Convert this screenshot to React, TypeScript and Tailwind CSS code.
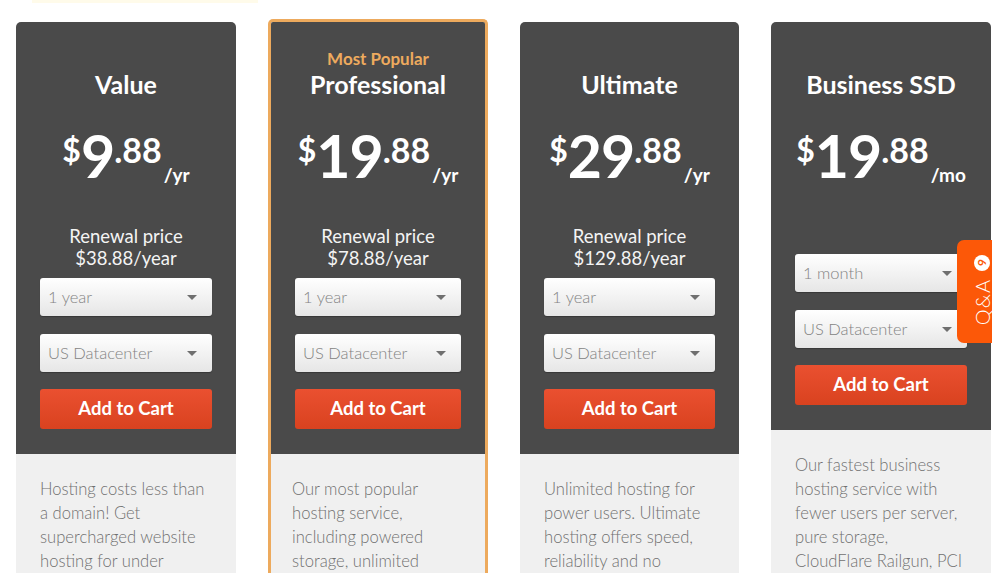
import React from 'react';

type Plan = {
  name: string;
  popular?: boolean;
  whole: string;
  cents: string;
  period: string;
  renewal?: string;
  term: string;
  width: string;
  lines: string[];
};

const plans: Plan[] = [
  {
    name: 'Value',
    whole: '9',
    cents: '.88',
    period: '/yr',
    renewal: '$38.88/year',
    term: '1 year',
    width: 'w-[220px]',
    lines: ['Hosting costs less than', 'a domain! Get', 'supercharged website', 'hosting for under', '$10 a year.'],
  },
  {
    name: 'Professional',
    popular: true,
    whole: '19',
    cents: '.88',
    period: '/yr',
    renewal: '$78.88/year',
    term: '1 year',
    width: 'w-[220px]',
    lines: ['Our most popular', 'hosting service,', 'including powered', 'storage, unlimited', 'bandwidth and more.'],
  },
  {
    name: 'Ultimate',
    whole: '29',
    cents: '.88',
    period: '/yr',
    renewal: '$129.88/year',
    term: '1 year',
    width: 'w-[219px]',
    lines: ['Unlimited hosting for', 'power users. Ultimate', 'hosting offers speed,', 'reliability and no', 'limits.'],
  },
  {
    name: 'Business SSD',
    whole: '19',
    cents: '.88',
    period: '/mo',
    term: '1 month',
    width: 'w-[220px]',
    lines: ['Our fastest business', 'hosting service with', 'fewer users per server,', 'pure storage,', 'CloudFlare Railgun, PCI', 'compliance and more.'],
  },
];

function Select({ label }: { label: string }) {
  return (
    <div className="flex h-[38px] items-center justify-between rounded-[3px] bg-gradient-to-b from-white to-[#e6e6e6] pl-[8px] pr-[15px] shadow-[0_1px_1px_rgba(0,0,0,0.25)]">
      <span className="text-[16.5px] font-light text-[#838383]">{label}</span>
      <span className="h-0 w-0 border-x-[5px] border-t-[5px] border-x-transparent border-t-[#6f6f6f]" />
    </div>
  );
}

function Card({ plan }: { plan: Plan }) {
  return (
    <div
      className={
        plan.popular
          ? `${plan.width} overflow-hidden rounded-t-[5px] border-[3px] border-b-0 border-[#edaa5d]`
          : `${plan.width} mt-[3px] overflow-hidden rounded-t-[5px]`
      }
    >
      <div className="bg-[#4a4a4a] px-6 pb-[25px] pt-[26px] text-center">
        <div className="h-[22px] text-[17px] font-bold leading-[22px] text-[#eeaa5e]">
          {plan.popular ? 'Most Popular' : ''}
        </div>
        <h2 className="whitespace-nowrap text-[25px] font-bold leading-[28px] text-white">{plan.name}</h2>

        <div className="mt-[20px] flex h-[80px] items-start justify-center text-white">
          <span className="mt-[16px] text-[32px] font-bold leading-none">$</span>
          <span className="mt-[8px] text-[59px] font-bold leading-none tracking-[-1px]">{plan.whole}</span>
          <span className="mt-[15px] text-[34px] font-bold leading-none">{plan.cents}</span>
          <span className="mt-[47px] pl-[2px] text-[19px] font-bold leading-none">{plan.period}</span>
        </div>

        {plan.renewal ? (
          <div className="mt-[27px] text-[18.5px] leading-[22px] text-[#f4f4f4]">
            Renewal price
            <br />
            {plan.renewal}
          </div>
        ) : null}

        <div className={plan.renewal ? 'mt-[9px] text-left' : 'mt-[56px] text-left'}>
          <Select label={plan.term} />
          <div className="mt-[18px]">
            <Select label="US Datacenter" />
          </div>
          <button className="mt-[17px] h-[40px] w-full rounded-[3px] bg-gradient-to-b from-[#ea5030] to-[#d9421f] text-[18.5px] font-bold text-white">
            Add to Cart
          </button>
        </div>
      </div>
      <div
        className={
          plan.popular
            ? 'bg-[#f0f0f0] pb-8 pl-[21px] pr-6 pt-[23px] text-[16.6px] font-light leading-[24px] text-[#707070]'
            : 'bg-[#f0f0f0] px-6 pb-8 pt-[23px] text-[16.6px] font-light leading-[24px] text-[#707070]'
        }
      >
        {plan.lines.map((line) => (
          <div key={line} className="whitespace-nowrap">
            {line}
          </div>
        ))}
      </div>
    </div>
  );
}

export default function App() {
  return (
    <div className="relative h-[573px] overflow-hidden bg-white font-['Lato','Open_Sans',sans-serif]">
      <div className="ml-[32px] h-[3px] w-[226px] bg-[#fffbea]" />
      <div className="flex items-start gap-8 pl-4 pt-[16px]">
        {plans.map((p) => (
          <Card key={p.name} plan={p} />
        ))}
      </div>

      {/* Q&A side tab */}
      <div className="absolute right-[-15px] top-[240px] flex h-[103px] w-[50px] flex-col items-center rounded-l-[7px] bg-[#fc5808] pt-[15px]">
        <span className="flex h-[16px] w-[16px] rotate-180 items-center justify-center rounded-full bg-white text-[12px] font-bold leading-none text-[#fc5808] [writing-mode:vertical-rl]">
          9
        </span>
        <span className="mt-[8px] rotate-180 text-[20px] font-light leading-none tracking-[1px] text-white [writing-mode:vertical-rl]">
          Q&amp;A
        </span>
      </div>
    </div>
  );
}
